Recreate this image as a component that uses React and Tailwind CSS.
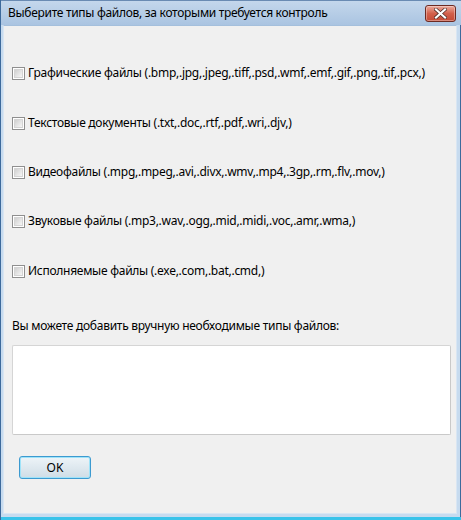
import React from "react";

const font = { fontFamily: '"Noto Sans", "Open Sans", sans-serif' };

function Checkbox() {
  return (
    <span className="inline-flex h-[13px] w-[13px] shrink-0 items-center justify-center border border-[#8f8f8f] bg-white">
      <span className="h-[9px] w-[9px] border border-[#d4d4d4] bg-gradient-to-br from-[#d0d0d0] to-[#f6f6f6]" />
    </span>
  );
}

function Row({ label, className }) {
  return (
    <div className={"flex h-[16px] items-center gap-[3px] pl-[8px] " + className}>
      <Checkbox />
      <span className="whitespace-nowrap text-[12px] leading-[16px] tracking-[-0.27px] text-black">{label}</span>
    </div>
  );
}

export default function App() {
  return (
    <div
      className="flex h-[520px] w-[461px] flex-col border-l border-[#3d6a9c] bg-[#c7dbef]"
      style={font}
    >
      <div className="flex h-[25px] shrink-0 items-start justify-between border-t border-[#6a8bb3] bg-gradient-to-b from-[#c4d7ec] to-[#aac4e1] pl-[7px] pr-[5px]">
        <span className="mt-[4px] whitespace-nowrap text-[12px] leading-[16px] tracking-[-0.3px] text-black">
          Выберите типы файлов, за которыми требуется контроль
        </span>
        <div className="mt-[4px] flex h-[17px] w-[31px] items-center justify-center rounded-[3px] border border-[#6d2a22] bg-gradient-to-b from-[#eba99c] via-[#d2604b] to-[#c44a36] shadow-[inset_0_0_0_1px_rgba(255,255,255,0.35)]">
          <svg width="13" height="11" viewBox="0 0 13 11">
            <path d="M2 1.5 L11 9.5 M11 1.5 L2 9.5" stroke="#4a2a26" strokeWidth="3.6" strokeLinecap="square" />
            <path d="M2 1.5 L11 9.5 M11 1.5 L2 9.5" stroke="#ffffff" strokeWidth="2.2" strokeLinecap="square" />
          </svg>
        </div>
      </div>
      <div className="flex flex-1 border-r border-[#3d6a9c] pb-[3px] pl-[2px] pr-[3px]">
        <div className="flex flex-1 flex-col border border-[#d9e6f3] border-t-[#a4bfdc] bg-[#f0f0f0]">
          <Row className="mt-[39px]" label="Графические файлы (.bmp,.jpg,.jpeg,.tiff,.psd,.wmf,.emf,.gif,.png,.tif,.pcx,)" />
          <Row className="mt-[34px]" label="Текстовые документы (.txt,.doc,.rtf,.pdf,.wri,.djv,)" />
          <Row className="mt-[33px]" label="Видеофайлы (.mpg,.mpeg,.avi,.divx,.wmv,.mp4,.3gp,.rm,.flv,.mov,)" />
          <Row className="mt-[33px]" label="Звуковые файлы (.mp3,.wav,.ogg,.mid,.midi,.voc,.amr,.wma,)" />
          <Row className="mt-[34px]" label="Исполняемые файлы (.exe,.com,.bat,.cmd,)" />
          <div className="mt-[39px] pl-[8px] text-[12px] leading-[16px] tracking-[-0.27px] text-black">
            Вы можете добавить вручную необходимые типы файлов:
          </div>
          <div className="ml-[8px] mr-[5px] mt-[11px] h-[90px] rounded-[2px] border border-[#d5d5d5] border-r-[#c9c9c9] border-b-[#c9c9c9] bg-white" />
          <div className="ml-[15px] mt-[21px] flex h-[23px] w-[72px] items-center justify-center rounded-[3px] border border-[#3c9ad0] bg-gradient-to-b from-[#eef4f8] to-[#cfdde6] text-[12px] text-black shadow-[inset_0_0_0_1px_#9fe3f9]">
            OK
          </div>
        </div>
      </div>
      <div className="h-[3px] shrink-0 bg-[#39c3ea]" />
    </div>
  );
}
